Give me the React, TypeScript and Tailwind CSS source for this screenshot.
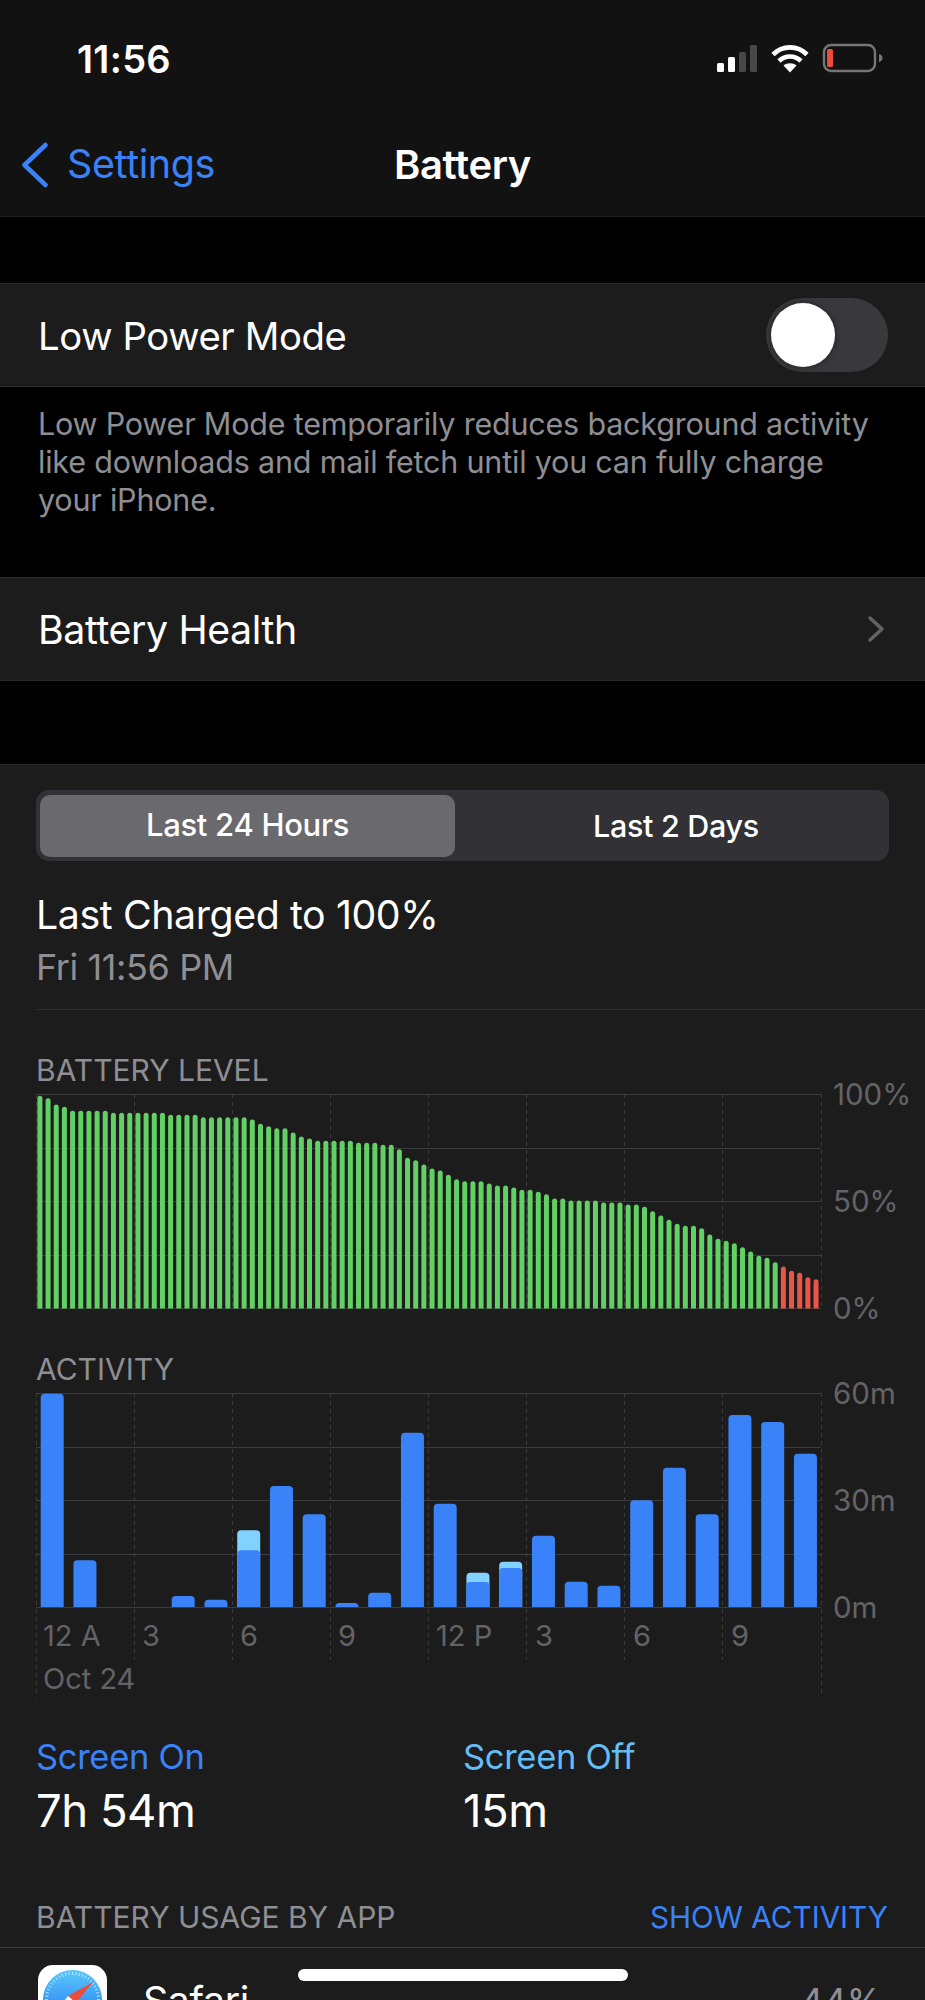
const batteryTops = [
  165, 172, 191, 198, 210, 210, 210, 210, 210, 216, 216, 216, 216, 216, 216, 216,
  222, 222, 222, 222, 229, 229, 229, 229, 229, 229, 236, 249, 256, 262, 262, 275,
  287, 293, 300, 300, 300, 300, 300, 306, 306, 306, 312, 312, 325, 351, 358, 371,
  383, 389, 402, 415, 421, 421, 421, 428, 434, 434, 440, 447, 447, 453, 460, 473,
  473, 479, 479, 479, 479, 485, 485, 485, 491, 491, 498, 511, 524, 537, 549, 555,
  555, 562, 581, 594, 600, 607, 619, 632, 645, 651, 664, 677, 690, 696, 709, 715,
];
const batteryLevels = batteryTops.map((t) => (803 - t) / 3);

// [screen on height, total height incl. screen off]
const activity: [number, number][] = [
  [640, 640], [140, 140], [0, 0], [0, 0], [33, 33], [22, 22], [170, 230], [363, 363],
  [278, 278], [12, 12], [43, 43], [523, 523], [310, 310], [75, 103], [117, 136], [214, 214],
  [76, 76], [64, 64], [320, 320], [418, 418], [278, 278], [576, 576], [555, 555], [460, 460],
].map(([a, b]) => [a / 3, b / 3] as [number, number]);

const hourLines = [98, 196, 294, 392, 490, 588, 686];

function topRounded(x: number, w: number, bottom: number, h: number, r: number) {
  const rr = Math.min(r, h);
  return `M${x} ${bottom}V${bottom - h + rr}a${rr} ${rr} 0 0 1 ${rr} ${-rr}H${x + w - rr}a${rr} ${rr} 0 0 1 ${rr} ${rr}V${bottom}Z`;
}

function Grid({ dashTo, edgeTo }: { dashTo: number; edgeTo: number }) {
  return (
    <g stroke="#3c3c3f" strokeWidth="1">
      {[0.5, 54.5, 107.5, 161.5, 214.5].map((y) => (
        <line key={y} x1="0" x2="785" y1={y} y2={y} />
      ))}
      {hourLines.map((x) => (
        <line key={x} x1={x + 0.5} x2={x + 0.5} y1="0" y2={dashTo} strokeDasharray="4 4" />
      ))}
      <line x1="0.5" x2="0.5" y1="0" y2={edgeTo} strokeDasharray="4 4" />
      <line x1="785.5" x2="785.5" y1="0" y2={edgeTo} strokeDasharray="4 4" />
    </g>
  );
}

function BatteryChart() {
  return (
    <svg width="786" height="216" className="block shrink-0">
      <Grid dashTo={215} edgeTo={215} />
      {batteryLevels.map((h, i) => (
        <path
          key={i}
          d={topRounded(1.4 + i * 8.17, 5, 214.5, h, 2.5)}
          fill={i >= 91 ? '#eb5545' : '#63d066'}
        />
      ))}
    </svg>
  );
}

function ActivityChart() {
  const labels = [
    ['12 A', 7], ['3', 106], ['6', 204], ['9', 302], ['12 P', 400], ['3', 499], ['6', 597], ['9', 695],
  ] as const;
  return (
    <svg width="786" height="306" className="block shrink-0">
      <Grid dashTo={267} edgeTo={305} />
      {activity.map(([on, total], i) => {
        const x = 4.7 + i * 32.75;
        if (total === 0) return null;
        return (
          <g key={i}>
            {total > on && <path d={topRounded(x, 23, 214, total, 4)} fill="#82d2ff" />}
            <path d={topRounded(x, 23, 214, on, 4)} fill="#3a82f7" />
          </g>
        );
      })}
      {labels.map(([t, x]) => (
        <text key={x} x={x} y="253" fill="#636366" fontSize="29" fontFamily="Inter, sans-serif">
          {t}
        </text>
      ))}
      <text x="7" y="296" fill="#636366" fontSize="29" fontFamily="Inter, sans-serif">
        Oct 24
      </text>
    </svg>
  );
}

function AxisLabels({ items }: { items: string[] }) {
  return (
    <div className="ml-[11px] -mt-[14px] -mb-[14px] h-[242px] flex flex-col justify-between text-[29.5px] leading-[28px] text-[#636366]">
      {items.map((t) => (
        <span key={t}>{t}</span>
      ))}
    </div>
  );
}

function StatusIcons() {
  return (
    <svg width="170" height="32" viewBox="0 0 170 32" className="block">
      {/* signal */}
      <rect x="0" y="20" width="7" height="9" rx="1.5" fill="#fff" />
      <rect x="11" y="14" width="7" height="15" rx="1.5" fill="#fff" />
      <rect x="22" y="9" width="7" height="20" rx="1.5" fill="#48484a" />
      <rect x="33" y="2" width="7" height="27" rx="1.5" fill="#48484a" />
      {/* wifi */}
      <path d="M56 11.5C65.500 2 80.500 2 90 11.5" fill="none" stroke="#fff" strokeWidth="4.6" />
      <path d="M62 18C68.500 12 77.500 12 84 18" fill="none" stroke="#fff" strokeWidth="4.6" />
      <path d="M66.500 22.500C70 19.500 76 19.500 79.500 22.500L73 29.500Z" fill="#fff" />
      {/* battery */}
      <rect x="107" y="2" width="51" height="26" rx="7" fill="none" stroke="#76767a" strokeWidth="2.4" />
      <rect x="110" y="6" width="6" height="18" rx="1.5" fill="#eb4d3d" />
      <path d="M162 11c2 .6 3.5 2 3.5 4s-1.500 3.400-3.500 4z" fill="#76767a" />
    </svg>
  );
}

function SafariIcon() {
  const ticks = Array.from({ length: 48 }, (_, i) => (i * 360) / 48);
  return (
    <svg width="69" height="69" viewBox="0 0 69 69" className="block shrink-0">
      <defs>
        <linearGradient id="safariBlue" x1="0" y1="0" x2="0" y2="1">
          <stop offset="0" stopColor="#5ac8fa" />
          <stop offset="1" stopColor="#1e6ff0" />
        </linearGradient>
      </defs>
      <rect width="69" height="69" rx="15" fill="#fff" />
      <circle cx="34.5" cy="34.500" r="29.500" fill="url(#safariBlue)" />
      {ticks.map((a) => (
        <line
          key={a}
          x1="34.5"
          x2="34.5"
          y1="7"
          y2="10"
          stroke="#d8effd"
          strokeWidth="0.8"
          transform={`rotate(${a} 34.5 34.5)`}
        />
      ))}
      <path d="M55 17 L30 31 L38 38Z" fill="#eb4d3d" />
      <path d="M14 52 L30 31 L38 38Z" fill="#fff" />
    </svg>
  );
}

export default function App() {
  return (
    <div className="relative h-[2000px] w-full overflow-hidden bg-black text-white font-['Inter',sans-serif]">
      <header className="h-[217px] bg-[#121212] border-b border-[#222224]">
        <div className="flex items-center justify-between h-[118px] pl-[77px] pr-[38px]">
          <span className="text-[38px] font-semibold tracking-[0.3px]">11:56</span>
          <StatusIcons />
        </div>
        <div className="relative flex items-center justify-center h-[94px]">
          <div className="absolute left-[21px] inset-y-0 flex items-center gap-[18px] text-[#3a82f7]">
            <svg width="28" height="46" viewBox="0 0 28 46">
              <path d="M24.500 3 L3.500 23 L24.500 43" fill="none" stroke="#3a82f7" strokeWidth="4.500" strokeLinecap="round" strokeLinejoin="round" />
            </svg>
            <span className="text-[39.5px] tracking-[-0.4px]">Settings</span>
          </div>
          <span className="text-[40px] font-semibold tracking-[-0.4px]">Battery</span>
        </div>
      </header>

      <div className="h-[66px]" />
      <div className="flex items-center justify-between h-[104px] pl-[38px] pr-[37px] bg-[#1c1c1d] border-y border-[#2a2a2c]">
        <span className="mt-[3px] text-[38.3px] tracking-[-0.4px]">Low Power Mode</span>
        <div className="flex items-center w-[122px] h-[74px] rounded-full bg-[#39393d] pl-[5px]">
          <div className="w-[64px] h-[64px] rounded-full bg-white shadow-[0_0_6px_rgba(0,0,0,0.45)]" />
        </div>
      </div>
      <p className="pl-[38px] pr-[30px] pt-[18px] h-[190px] text-[30.5px] leading-[38px] tracking-[-0.2px] text-[#8e8e93]">
        Low Power Mode temporarily reduces background activity
        <br />
        like downloads and mail fetch until you can fully charge
        <br />
        your iPhone.
      </p>
      <div className="flex items-center justify-between h-[104px] pl-[38px] pr-[40px] bg-[#1c1c1d] border-y border-[#2a2a2c]">
        <span className="mt-[3px] text-[39.3px] tracking-[-0.4px]">Battery Health</span>
        <svg width="18" height="28" viewBox="0 0 18 28">
          <path d="M3 3 L15 14 L3 25" fill="none" stroke="#636366" strokeWidth="3.500" strokeLinecap="round" strokeLinejoin="round" />
        </svg>
      </div>
      <div className="h-[83px]" />

      <section className="bg-[#1c1c1d] border-t border-[#2a2a2c] h-[1236px] pt-[25px]">
        <div className="mx-[36px] w-[853px] h-[71px] rounded-[13px] bg-[#313136] p-[4px] flex items-center">
          <div className="w-[415px] h-[62px] rounded-[10px] bg-[#69696e] flex items-center justify-center text-[31px] font-medium tracking-[-0.3px]">
            Last 24 Hours
          </div>
          <div className="flex-1 pl-[12px] text-center text-[30.5px] font-medium tracking-[-0.3px]">Last 2 Days</div>
        </div>

        <div className="ml-[36px] mt-[32px] text-[39.3px] leading-[44px] tracking-[-0.4px]">Last Charged to 100%</div>
        <div className="ml-[36px] mt-[10px] text-[36px] leading-[40px] tracking-[-0.4px] text-[#8e8e93]">Fri 11:56 PM</div>
        <div className="ml-[36px] mt-[22px] border-t border-[#2e2e30]" />

        <div className="ml-[36px] mt-[42px] text-[30px] leading-[36px] text-[#8e8e93]">BATTERY LEVEL</div>
        <div className="flex items-start ml-[36px] mt-[6px]">
          <BatteryChart />
          <AxisLabels items={['100%', '50%', '0%']} />
        </div>

        <div className="ml-[36px] mt-[41px] text-[30px] leading-[36px] text-[#8e8e93]">ACTIVITY</div>
        <div className="flex items-start ml-[36px] mt-[6px]">
          <ActivityChart />
          <AxisLabels items={['60m', '30m', '0m']} />
        </div>

        <div className="flex ml-[36px] mt-[38px]">
          <div className="w-[427px]">
            <div className="text-[34.5px] leading-[40px] tracking-[-0.3px] text-[#3a82f7]">Screen On</div>
            <div className="mt-[9px] text-[45.5px] leading-[50px] tracking-[-0.5px]">7h 54m</div>
          </div>
          <div>
            <div className="text-[34.5px] leading-[40px] tracking-[-0.3px] text-[#64bdf5]">Screen Off</div>
            <div className="mt-[9px] text-[45.5px] leading-[50px] tracking-[-0.5px]">15m</div>
          </div>
        </div>

        <div className="flex justify-between ml-[36px] mr-[37px] mt-[63px] text-[30px] leading-[36px]">
          <span className="text-[#8e8e93]">BATTERY USAGE BY APP</span>
          <span className="text-[29.7px] text-[#3a82f7]">SHOW ACTIVITY</span>
        </div>
        <div className="mt-[12px] border-t border-[#3a3a3c]" />

        <div className="flex items-start pl-[38px] pr-[43px] pt-[17px]">
          <SafariIcon />
          <span className="ml-[36px] mt-[14px] text-[39.3px] leading-[44px] tracking-[-0.4px]">Safari</span>
          <span className="ml-auto mt-[14px] text-[36px] leading-[44px] text-[#8e8e93]">44%</span>
        </div>
      </section>

      <div className="absolute left-[298px] top-[1969px] w-[330px] h-[12px] rounded-full bg-white" />
    </div>
  );
}
